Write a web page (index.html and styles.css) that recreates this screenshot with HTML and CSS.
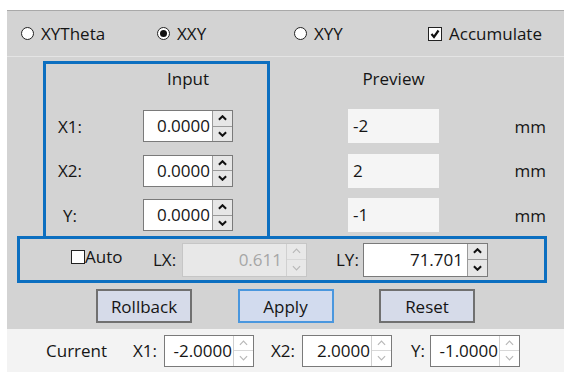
FILE: index.html
```html
<!DOCTYPE html>
<html lang="en">
<head>
    <meta charset="UTF-8">
    <title>Offset Input</title>
    <link rel="stylesheet" href="styles.css">
</head>
<body>
    <div class="window">
        <!-- Mode selection -->
        <div class="mode-bar">
            <label class="option"><span class="radio"></span>XYTheta</label>
            <label class="option"><span class="radio checked"></span>XXY</label>
            <label class="option"><span class="radio"></span>XYY</label>
            <label class="option"><span class="check checked"><svg viewBox="0 0 10 10"><polyline points="1.5,5 4,8 8.5,1.5"/></svg></span>Accumulate</label>
        </div>

        <div class="content">
            <div class="upper">
                <div class="input-box">
                    <div class="head">Input</div>
                    <div class="rows">
                        <div class="lbl">X1:</div>
                        <div class="spin"><span class="spin-val">0.0000</span><span class="spin-btns"><span><svg viewBox="0 0 10 6"><polyline points="1,5 5,1 9,5"/></svg></span><span><svg viewBox="0 0 10 6"><polyline points="1,1 5,5 9,1"/></svg></span></span></div>
                        <div class="lbl">X2:</div>
                        <div class="spin"><span class="spin-val">0.0000</span><span class="spin-btns"><span><svg viewBox="0 0 10 6"><polyline points="1,5 5,1 9,5"/></svg></span><span><svg viewBox="0 0 10 6"><polyline points="1,1 5,5 9,1"/></svg></span></span></div>
                        <div class="lbl">Y:</div>
                        <div class="spin"><span class="spin-val">0.0000</span><span class="spin-btns"><span><svg viewBox="0 0 10 6"><polyline points="1,5 5,1 9,5"/></svg></span><span><svg viewBox="0 0 10 6"><polyline points="1,1 5,5 9,1"/></svg></span></span></div>
                    </div>
                </div>

                <div class="preview-col">
                    <div class="head">Preview</div>
                    <div class="rows">
                        <div class="preview">-2</div>
                        <div class="preview">2</div>
                        <div class="preview">-1</div>
                    </div>
                </div>

                <div class="unit-col">
                    <div class="head"></div>
                    <div class="rows">
                        <div class="unit">mm</div>
                        <div class="unit">mm</div>
                        <div class="unit">mm</div>
                    </div>
                </div>
            </div>

            <!-- Length settings -->
            <div class="length-box">
                <label class="auto"><span class="check"></span>Auto</label>
                <span class="len-lbl">LX:</span>
                <div class="spin wide disabled"><span class="spin-val">0.611</span><span class="spin-btns"><span><svg viewBox="0 0 10 6"><polyline points="1,5 5,1 9,5"/></svg></span><span><svg viewBox="0 0 10 6"><polyline points="1,1 5,5 9,1"/></svg></span></span></div>
                <span class="len-lbl ly">LY:</span>
                <div class="spin wide"><span class="spin-val">71.701</span><span class="spin-btns"><span><svg viewBox="0 0 10 6"><polyline points="1,5 5,1 9,5"/></svg></span><span><svg viewBox="0 0 10 6"><polyline points="1,1 5,5 9,1"/></svg></span></span></div>
            </div>

            <div class="actions">
                <button class="btn">Rollback</button>
                <button class="btn primary">Apply</button>
                <button class="btn">Reset</button>
            </div>
        </div>

        <!-- Current position -->
        <div class="current-bar">
            <span class="cur-title">Current</span>
            <span class="cur-lbl">X1:</span>
            <div class="spin small"><span class="spin-val">-2.0000</span><span class="spin-btns"><span><svg viewBox="0 0 10 6"><polyline points="1,5 5,1 9,5"/></svg></span><span><svg viewBox="0 0 10 6"><polyline points="1,1 5,5 9,1"/></svg></span></span></div>
            <span class="cur-lbl x2">X2:</span>
            <div class="spin small"><span class="spin-val">2.0000</span><span class="spin-btns"><span><svg viewBox="0 0 10 6"><polyline points="1,5 5,1 9,5"/></svg></span><span><svg viewBox="0 0 10 6"><polyline points="1,1 5,5 9,1"/></svg></span></span></div>
            <span class="cur-lbl y">Y:</span>
            <div class="spin small"><span class="spin-val">-1.0000</span><span class="spin-btns"><span><svg viewBox="0 0 10 6"><polyline points="1,5 5,1 9,5"/></svg></span><span><svg viewBox="0 0 10 6"><polyline points="1,1 5,5 9,1"/></svg></span></span></div>
        </div>
    </div>
</body>
</html>
```

FILE: styles.css
```css
/* Base */
* {
    margin: 0;
    padding: 0;
    box-sizing: border-box;
}

body {
    background: #ffffff;
    font-family: 'Segoe UI', 'Open Sans', sans-serif;
    font-size: 17px;
    color: #151515;
}

.window {
    width: 557px;
    margin: 10px 0 0 7px;
    background: #d3d3d3;
}

/* Mode bar */
.mode-bar {
    display: grid;
    grid-template-columns: 136px 137px 134px auto;
    align-items: center;
    height: 47px;
    padding-left: 14px;
    border-top: 1px solid #a9a9a9;
    border-bottom: 1px solid #e4e4e4;
}

.option {
    display: flex;
    align-items: center;
    gap: 7px;
}

.radio {
    width: 13px;
    height: 13px;
    border: 1px solid #222;
    border-radius: 50%;
    background: #fff;
    display: flex;
    align-items: center;
    justify-content: center;
}

.radio.checked::after {
    content: "";
    width: 7px;
    height: 7px;
    border-radius: 50%;
    background: #111;
}

.check {
    width: 14px;
    height: 14px;
    border: 1px solid #222;
    background: #fff;
    display: flex;
    align-items: center;
    justify-content: center;
}

.check svg {
    width: 10px;
    height: 10px;
    fill: none;
    stroke: #111;
    stroke-width: 2.2;
}

/* Upper block */
.upper {
    display: flex;
    padding: 4px 0 0 36px;
}

.head {
    height: 30px;
    line-height: 30px;
    text-align: center;
}

.rows {
    display: grid;
    grid-template-rows: repeat(3, 32px);
    row-gap: 12.5px;
    padding-top: 16px;
    align-items: center;
}

.input-box {
    width: 227px;
    height: 178px;
    border: 3px solid #0c6fc0;
}

.input-box .head {
    margin-left: 97px;
    width: 90px;
}

.input-box .rows {
    grid-template-columns: 48px 90px;
    column-gap: 49px;
}

.lbl {
    text-align: center;
}

.preview-col {
    width: 91px;
    margin-left: 78px;
    padding-top: 3px;
}

.preview {
    height: 34px;
    line-height: 34px;
    background: #f5f5f5;
    padding-left: 5px;
}

.unit-col {
    width: 107px;
    padding-top: 3px;
}

.unit {
    text-align: right;
}

/* Spin box */
.spin {
    display: flex;
    height: 32px;
    width: 90px;
    border: 1px solid #7a7a7a;
    background: #fff;
}

.spin-val {
    flex: 1;
    text-align: right;
    padding-right: 2px;
    line-height: 30px;
}

.spin-btns {
    width: 20px;
    display: flex;
    flex-direction: column;
    border-left: 1px solid #9a9a9a;
    background: #e6e6e6;
}

.spin-btns span {
    flex: 1;
    display: flex;
    align-items: center;
    justify-content: center;
}

.spin-btns span:first-child {
    border-bottom: 1px solid #9a9a9a;
}

.spin-btns svg {
    width: 9px;
    height: 6px;
    fill: none;
    stroke: #111;
    stroke-width: 2.2;
}

.spin.wide {
    width: 125px;
    height: 34px;
}

.spin.wide .spin-val {
    line-height: 32px;
    padding-right: 4px;
}

.spin.disabled {
    background: #e8e8e8;
    border-color: #c6c6c6;
    color: #a6a6a6;
}

.spin.disabled .spin-btns,
.spin.small .spin-btns {
    background: transparent;
    border-left-color: #d0d0d0;
}

.spin.disabled .spin-btns span:first-child,
.spin.small .spin-btns span:first-child {
    border-bottom-color: #d8d8d8;
}

.spin.disabled svg,
.spin.small svg {
    stroke: #b8b8b8;
    stroke-width: 1.3;
}

/* Length box */
.length-box {
    display: flex;
    align-items: center;
    width: 530px;
    height: 47px;
    margin: -3px 0 0 10px;
    border: 3px solid #0c6fc0;
    padding-left: 51px;
}

.auto {
    display: flex;
    align-items: center;
    width: 82px;
    margin-bottom: 6px;
}

.len-lbl {
    width: 29px;
}

.len-lbl.ly {
    width: 27px;
    margin-left: 29px;
}

/* Buttons */
.actions {
    display: flex;
    gap: 45.5px;
    padding: 6px 0 6px 89px;
}

.btn {
    width: 96px;
    height: 34px;
    font: inherit;
    color: inherit;
    background: #d6dbe9;
    border: 2px solid #707070;
}

.btn.primary {
    background: #d2dbee;
    border-color: #4a97de;
}

/* Current bar */
.current-bar {
    display: flex;
    align-items: center;
    height: 43px;
    background: #f3f3f3;
    padding-left: 39px;
}

.cur-title {
    width: 87px;
}

.cur-lbl {
    width: 31px;
}

.cur-lbl.x2 {
    margin-left: 17px;
}

.cur-lbl.y {
    width: 19px;
    margin-left: 19px;
}

.spin.small .spin-val {
    padding-right: 1px;
}
```
